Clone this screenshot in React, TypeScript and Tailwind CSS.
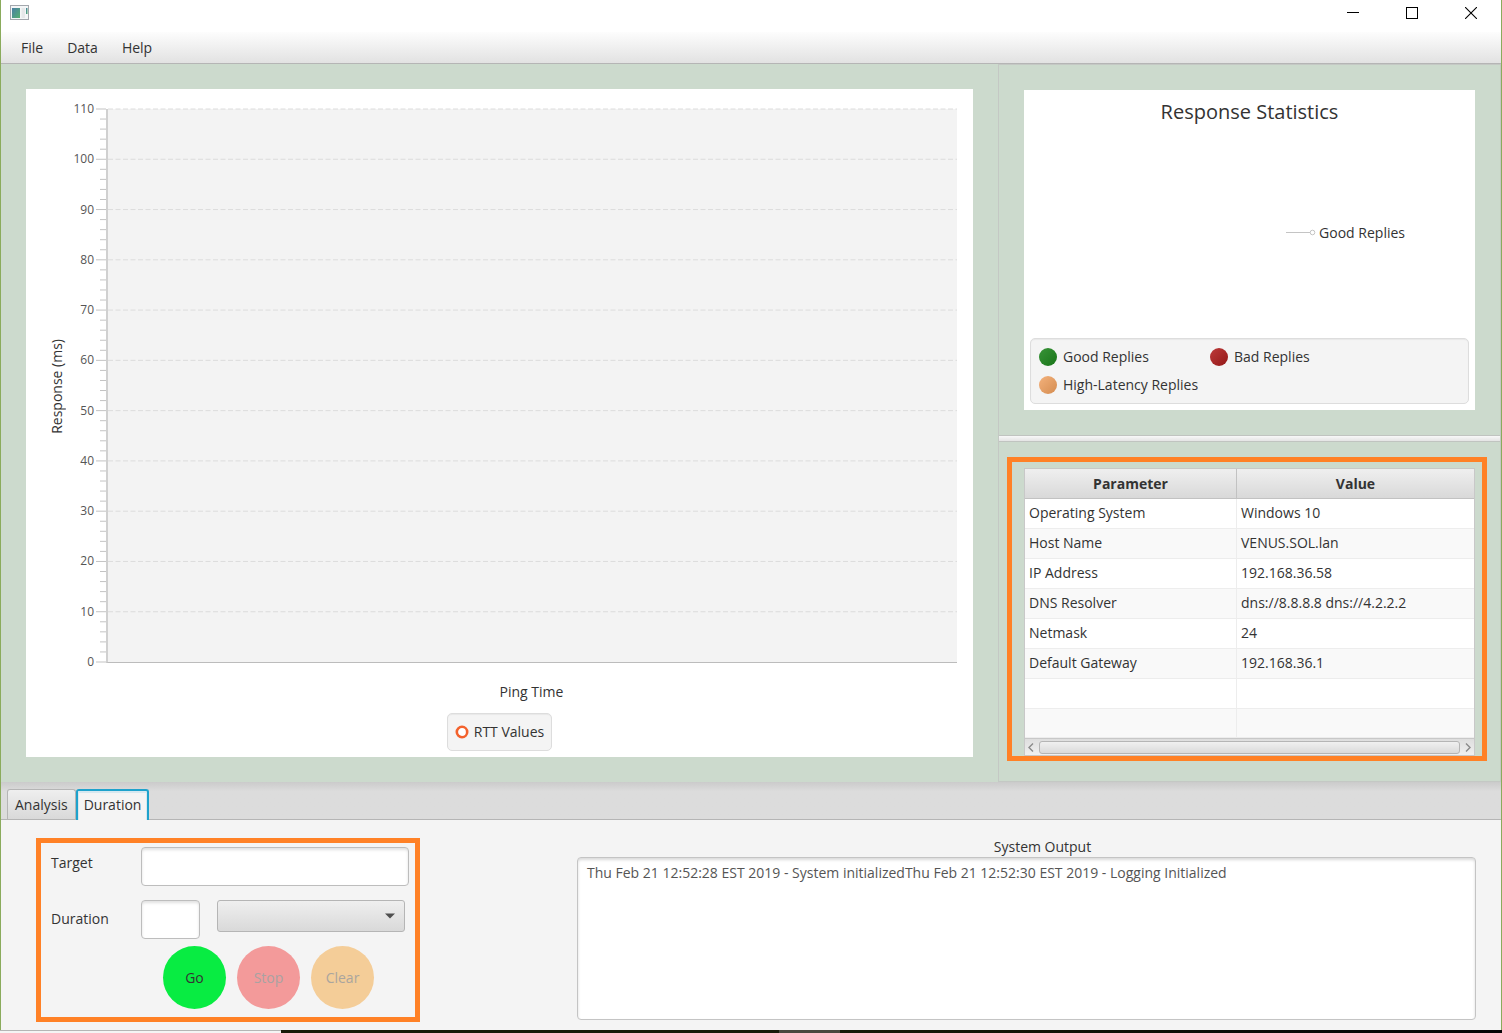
import React from 'react';

const majors = Array.from({ length: 12 }, (_, i) => i * 10);
const ticks = Array.from({ length: 56 }, (_, i) => i * 2);
const yOf = (v: number) => `${((110 - v) / 110) * 100}%`;

const rows: [string, string][] = [
  ['Operating System', 'Windows 10'],
  ['Host Name', 'VENUS.SOL.lan'],
  ['IP Address', '192.168.36.58'],
  ['DNS Resolver', 'dns://8.8.8.8 dns://4.2.2.2'],
  ['Netmask', '24'],
  ['Default Gateway', '192.168.36.1'],
  ['', ''],
  ['', ''],
];

function TitleBar() {
  return (
    <header className="flex h-8 shrink-0 items-start justify-between bg-white pr-6 pl-[9px]">
      <svg className="mt-[5px]" width="19" height="15" viewBox="0 0 19 15" aria-hidden="true">
        <defs>
          <linearGradient id="app" x1="0" y1="0" x2="1" y2="1">
            <stop offset="0" stopColor="#4a7fa5" />
            <stop offset="1" stopColor="#55b070" />
          </linearGradient>
        </defs>
        <rect x="0.5" y="0.5" width="18" height="14" fill="#f4f6f7" stroke="#a3a7ad" />
        <rect x="2" y="3" width="8" height="10" fill="url(#app)" />
        <rect x="11.5" y="3" width="3.5" height="10" fill="#e6e8ea" />
        <rect x="16" y="3" width="1.5" height="6" fill="url(#app)" />
      </svg>
      <div className="flex gap-[47px] pt-[7px]">
        <button type="button" aria-label="Minimize">
          <svg width="12" height="12" viewBox="0 0 12 12"><path d="M0 5.5H12" stroke="#000" /></svg>
        </button>
        <button type="button" aria-label="Maximize">
          <svg width="12" height="12" viewBox="0 0 12 12"><rect x="0.5" y="0.5" width="11" height="11" fill="none" stroke="#000" /></svg>
        </button>
        <button type="button" aria-label="Close">
          <svg width="12" height="12" viewBox="0 0 12 12"><path d="M0 0L12 12M12 0L0 12" stroke="#000" strokeWidth="1.1" /></svg>
        </button>
      </div>
    </header>
  );
}

function MenuBar() {
  return (
    <nav className="flex h-8 shrink-0 items-center gap-6 border-b border-[#b5b5b5] bg-linear-to-b from-[#fdfdfd] to-[#e2e2e2] px-5">
      <button type="button">File</button>
      <button type="button">Data</button>
      <button type="button">Help</button>
    </nav>
  );
}

function LineChart() {
  return (
    <section className="flex min-h-0 flex-1 flex-col items-center bg-white px-4 pt-5 pb-[6px]">
      <div className="flex min-h-0 w-full flex-1">
        <div className="flex w-16 shrink-0 items-center pl-[5px]">
          <span className="rotate-180 [writing-mode:vertical-rl]">Response (ms)</span>
        </div>
        <div className="flex-1 border-b border-l-2 border-b-[#bcbcbc] border-l-[#d0d0d0] bg-[#f3f3f3]">
          <svg className="block h-full w-full overflow-visible" aria-label="Response time chart">
            {majors.slice(1).map((v) => (
              <line key={v} x1="0" x2="100%" y1={yOf(v)} y2={yOf(v)} stroke="#dcdcdc" strokeDasharray="5 2.5" />
            ))}
            {ticks.map((v) => (
              <line key={v} x1={v % 10 ? -8 : -12} x2="-2" y1={yOf(v)} y2={yOf(v)} stroke="#c3c3c3" />
            ))}
            {majors.map((v) => (
              <text key={v} x="-14" y={yOf(v)} dy="4" textAnchor="end" fontSize="12" fill="#555555">
                {v}
              </text>
            ))}
          </svg>
        </div>
      </div>
      <p className="mt-[19px] pl-16">Ping Time</p>
      <div className="mt-[11px] flex h-[38px] items-center gap-[5px] rounded-[5px] border border-[#dddddd] bg-[#f4f4f4] px-[7px] shadow-[inset_0_1px_1px_rgba(0,0,0,0.05)]">
        <svg width="14" height="14" viewBox="0 0 14 14" aria-hidden="true">
          <circle cx="7" cy="7" r="5.2" fill="#fff" stroke="#f3622d" strokeWidth="2.6" />
        </svg>
        RTT Values
      </div>
    </section>
  );
}

function PieChart() {
  return (
    <section className="flex min-h-0 flex-1 flex-col bg-white px-[6px] pt-[7px] pb-[6px]">
      <h2 className="text-center text-xl leading-[30px]">Response Statistics</h2>
      <div className="flex flex-1 items-center justify-end pr-16">
        <svg width="30" height="9" viewBox="0 0 30 9" aria-hidden="true">
          <path d="M0 4.5H25" stroke="#c4c4c4" />
          <circle cx="26.5" cy="4.5" r="2.3" fill="#fff" stroke="#c4c4c4" />
        </svg>
        <span className="pl-[3px]">Good Replies</span>
      </div>
      <ul className="grid grid-cols-[171px_1fr] gap-y-1 rounded-[5px] border border-[#dddddd] bg-[#f4f4f4] px-2 py-[6px] leading-6 shadow-[inset_0_1px_1px_rgba(0,0,0,0.05)]">
        <li className="flex items-center gap-[6px]">
          <span className="h-[18px] w-[18px] rounded-full bg-linear-to-br from-[#389438] to-[#177517]" />
          Good Replies
        </li>
        <li className="flex items-center gap-[6px]">
          <span className="h-[18px] w-[18px] rounded-full bg-linear-to-br from-[#bd3a3a] to-[#931616]" />
          Bad Replies
        </li>
        <li className="flex items-center gap-[6px] whitespace-nowrap">
          <span className="h-[18px] w-[18px] rounded-full bg-linear-to-br from-[#f4b27c] to-[#d48c50]" />
          High-Latency Replies
        </li>
      </ul>
    </section>
  );
}

function ParameterTable() {
  return (
    <div className="mt-[15px] mr-[13px] mb-5 ml-2 border-5 border-[#ff8126] pt-[6px] pr-[7px] pl-3">
      <div className="border border-[#c8c8c8] bg-white">
        <table className="w-full table-fixed border-separate border-spacing-0">
          <thead>
            <tr className="h-[30px] bg-linear-to-b from-[#efefef] to-[#d8d8d8]">
              <th className="w-[212px] border-r border-b border-[#c2c2c2] font-bold">Parameter</th>
              <th className="border-b border-[#c2c2c2] font-bold">Value</th>
            </tr>
          </thead>
          <tbody>
            {rows.map(([name, value], i) => (
              <tr key={i} className="h-[30px] odd:bg-white even:bg-[#f9f9f9] last:h-[29px]">
                <td className="truncate border-r border-b border-[#ededed] px-1 pb-[2px]">{name}</td>
                <td className="truncate border-b border-[#ededed] px-1 pb-[2px]">{value}</td>
              </tr>
            ))}
          </tbody>
        </table>
        <div className="flex h-[17px] items-center gap-[5px] border-t border-[#c8c8c8] bg-linear-to-b from-[#dedede] to-[#f0f0f0] px-[3px]">
          <button type="button" aria-label="Scroll left">
            <svg width="6" height="9" viewBox="0 0 6 9"><path d="M5 0.5L1 4.5L5 8.5" fill="none" stroke="#8a8a8a" strokeWidth="1.4" /></svg>
          </button>
          <div className="h-[13px] flex-1 rounded-[3px] border border-[#b5b5b5] bg-linear-to-b from-[#f0f0f0] to-[#dadada]" />
          <button type="button" aria-label="Scroll right">
            <svg width="6" height="9" viewBox="0 0 6 9"><path d="M1 0.5L5 4.5L1 8.5" fill="none" stroke="#8a8a8a" strokeWidth="1.4" /></svg>
          </button>
        </div>
      </div>
    </div>
  );
}

function TabBar() {
  return (
    <div role="tablist" className="flex h-[38px] shrink-0 items-end border-b border-[#b5b5b5] bg-[#dcdcdc] bg-linear-to-b from-[#cbcbcb] to-[#dcdcdc] to-25% pl-[6px]">
      <button type="button" role="tab" aria-selected="false" className="h-[30px] rounded-t-[3px] border border-b-0 border-[#b5b5b5] bg-linear-to-b from-[#efefef] to-[#d9d9d9] px-[7px]">
        Analysis
      </button>
      <button type="button" role="tab" aria-selected="true" className="-mb-px h-[31px] rounded-t-[3px] border-2 border-b-0 border-[#1ea2cc] bg-[#f4f4f4] px-[6px] pb-[2px] shadow-[inset_0_1px_0_1px_#d6e8f0]">
        Duration
      </button>
    </div>
  );
}

const fieldClass =
  'shrink-0 rounded-[4px] border border-[#bdbdbd] bg-white px-2 shadow-[inset_0_2px_3px_rgba(0,0,0,0.12)] outline-none';
const roundButton = 'h-[63px] w-[63px] rounded-full';

function ControlForm() {
  return (
    <form className="w-96 shrink-0 border-5 border-[#ff8126] pt-[4px] pr-[5px] pb-2 pl-[10px]" onSubmit={(e) => e.preventDefault()}>
      <div className="flex items-start">
        <label htmlFor="target" className="w-[90px] pt-[6px]">Target</label>
        <input id="target" className={`h-[39px] w-[268px] ${fieldClass}`} />
      </div>
      <div className="mt-[14px] flex items-start">
        <label htmlFor="duration" className="w-[90px] pt-[9px]">Duration</label>
        <input id="duration" className={`h-[39px] w-[59px] ${fieldClass}`} />
        <div className="relative ml-[17px]">
          <select aria-label="Duration unit" className="h-8 w-[188px] appearance-none rounded-[3px] border border-[#b5b5b5] bg-linear-to-b from-[#efefef] to-[#d9d9d9] px-2">
            <option></option>
          </select>
          <svg className="pointer-events-none absolute top-[13px] right-[10px]" width="10" height="6" viewBox="0 0 10 6" aria-hidden="true">
            <path d="M0 0.5H10L5 5.5Z" fill="#4f4f4f" />
          </svg>
        </div>
      </div>
      <div className="mt-[7px] flex gap-[11px] pl-28">
        <button type="submit" className={`bg-[#08ec42] ${roundButton}`}>Go</button>
        <button type="button" disabled className={`bg-[#f39a9a] text-[#a9a2a2] ${roundButton}`}>Stop</button>
        <button type="button" disabled className={`bg-[#f4cd98] text-[#aaa59e] ${roundButton}`}>Clear</button>
      </div>
    </form>
  );
}

export default function App() {
  return (
    <div className="flex min-h-screen flex-col bg-[#f4f4f4] font-['Open_Sans',sans-serif] text-[14px] leading-5 text-[#333333]">
      <div className="flex flex-1 flex-col border-x border-[#8aab5c]">
        <TitleBar />
        <MenuBar />
        <main className="grid flex-1 grid-cols-[997fr_503fr] bg-[#ccdacd]">
          <div className="flex flex-col p-[25px]">
            <LineChart />
          </div>
          <div className="flex flex-col border border-[#c4c8c4]">
            <div className="flex flex-1 flex-col p-[25px]">
              <PieChart />
            </div>
            <div className="h-[7px] border-y border-[#c0c4c0] bg-linear-to-b from-[#f8f8f8] to-[#e4e4e4]" />
            <ParameterTable />
          </div>
        </main>
        <TabBar />
        <div className="flex items-start gap-[157px] pt-[18px] pr-[25px] pb-2 pl-[35px]">
          <ControlForm />
          <div className="flex flex-1 flex-col self-stretch pb-[2px]">
            <label htmlFor="log" className="mb-px pl-8 text-center leading-[18px]">System Output</label>
            <textarea
              id="log"
              readOnly
              className="flex-1 resize-none rounded-[4px] border border-[#c4c4c4] bg-white px-[9px] py-[5px] text-[#555555] shadow-[inset_0_2px_3px_rgba(0,0,0,0.15)] outline-none"
              defaultValue="Thu Feb 21 12:52:28 EST 2019 - System initializedThu Feb 21 12:52:30 EST 2019 - Logging Initialized"
            />
          </div>
        </div>
      </div>
      <footer className="flex h-[3px] shrink-0">
        <div className="w-[281px] border-t border-[#b5b5b5] bg-[#f4f4f4]" />
        <div className="w-[498px] bg-[#171a08]" />
        <div className="w-[61px] bg-[#4a483e]" />
        <div className="flex-1 bg-linear-to-r from-[#171a08] to-[#050505]" />
      </footer>
    </div>
  );
}
